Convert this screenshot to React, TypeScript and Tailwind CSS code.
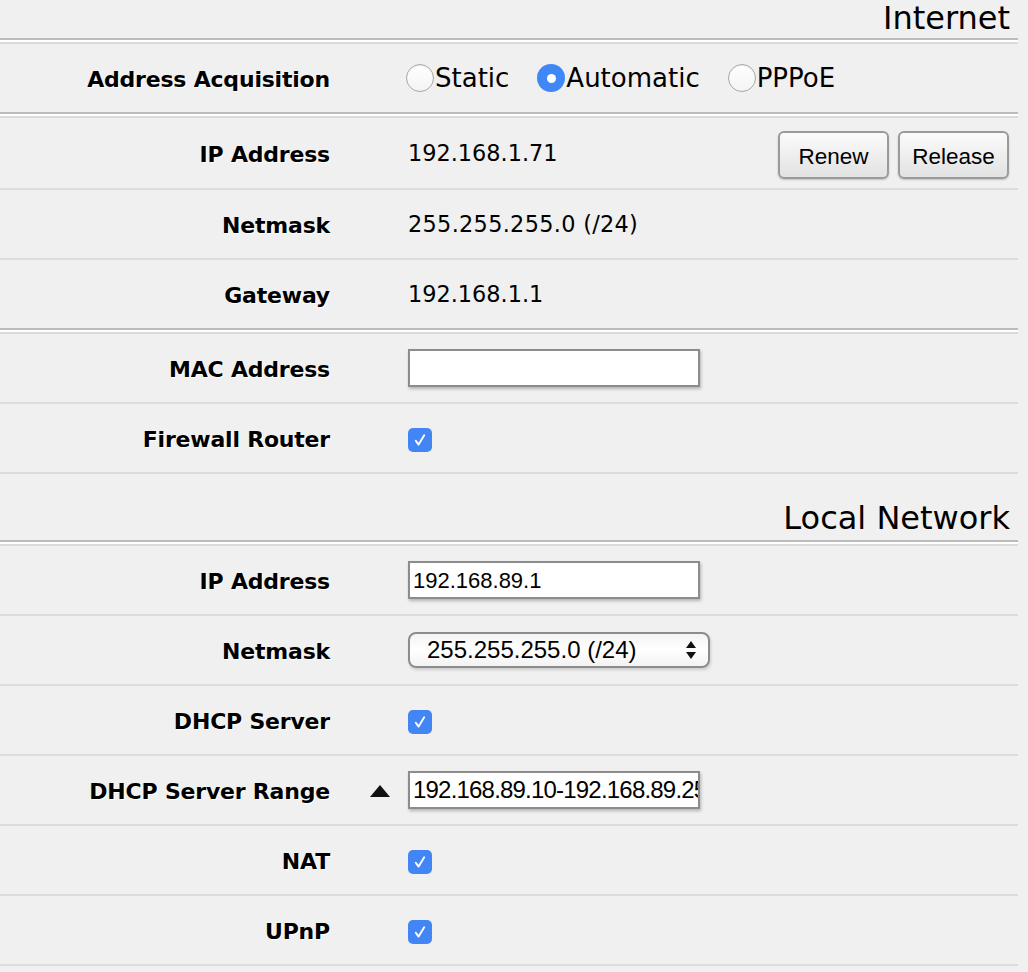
import React from 'react';

const verdana = "font-['DejaVu_Sans',Verdana,sans-serif]";
const helv = "font-['Liberation_Sans',Arial,sans-serif]";

function DoubleLine() {
  return (
    <div>
      <div className="h-[2px] bg-[#bcbcbc]" />
      <div className="h-[2px] bg-white" />
      <div className="h-[2px] bg-[#dadada]" />
    </div>
  );
}

function Row({ label, children, line = true, extra, h = 'h-[68px]' }: { label: string; children?: React.ReactNode; line?: boolean; extra?: React.ReactNode; h?: string }) {
  return (
    <div className={line ? 'border-b-2 border-[#dcdcdc]' : ''}>
      <div className={`flex items-center ${h}`}>
        <div className="w-[330px] shrink-0 text-right text-[22px] font-bold text-black tracking-[-0.2px] pt-[3px] [text-shadow:1px_1px_0_#fff]">{label}</div>
        <div className="w-[78px] shrink-0 flex justify-end pr-[18px] pt-[2px]">{extra}</div>
        <div className="flex-1 flex items-center">{children}</div>
      </div>
    </div>
  );
}

function Check() {
  return (
    <div className="w-[24px] h-[24px] mt-[3px] rounded-[5px] bg-[#4186f4] flex items-center justify-center">
      <svg width="16" height="16" viewBox="0 0 16 16" fill="none">
        <path d="M3.8 8.8 L6.6 12.6 L12.2 3.2" stroke="#fff" strokeWidth="1.9" strokeLinecap="round" strokeLinejoin="round" />
      </svg>
    </div>
  );
}

function Radio({ checked, label }: { checked?: boolean; label: string }) {
  return (
    <div className="flex items-center mr-[28px]">
      {checked ? (
        <div className="w-[28px] h-[28px] rounded-full bg-[#3e87f5] flex items-center justify-center">
          <div className="w-[9px] h-[9px] rounded-full bg-white" />
        </div>
      ) : (
        <div className="w-[28px] h-[28px] rounded-full border border-[#a8a8a8] bg-gradient-to-b from-white to-[#f4f4f4] shadow-[inset_0_1px_1px_rgba(0,0,0,0.08)]" />
      )}
      <span className="text-[26px] leading-none ml-[1px]">{label}</span>
    </div>
  );
}

function TextInput({ value }: { value?: string }) {
  return (
    <div className={`w-[292px] h-[38px] bg-white border-2 border-[#8c8c8c] shadow-[1px_2px_3px_rgba(0,0,0,0.25)] flex items-center px-[3px] overflow-hidden whitespace-nowrap ${helv} text-[22px]`}>
      {value}
    </div>
  );
}

function Button({ children }: { children: React.ReactNode }) {
  return (
    <div className={`w-[111px] h-[48px] rounded-[6px] border-2 border-[#9a9a9a] bg-gradient-to-b from-[#fbfbfb] to-[#e2e2e2] shadow-[0_1px_2px_rgba(0,0,0,0.2)] flex items-center justify-center pt-[4px] text-[22.5px] ${helv}`}>
      {children}
    </div>
  );
}

export default function App() {
  return (
    <div className={`min-h-screen bg-[#f0f0f0] text-black ${verdana}`}>
      <div className="w-[1018px]">
        <div className="h-[38px] flex items-start justify-end pr-[8px] text-[32px] leading-[36px]">Internet</div>
        <DoubleLine />
        <Row label="Address Acquisition" line={false}>
          <div className="flex items-center -ml-[2px]">
            <Radio label="Static" />
            <Radio checked label="Automatic" />
            <Radio label="PPPoE" />
          </div>
        </Row>
        <DoubleLine />
        <Row label="IP Address" h="h-[70px]">
          <span className="text-[22.4px] pt-[2px]">192.168.1.71</span>
          <div className="ml-auto flex gap-[9px] pr-[9px] pt-[3px]">
            <Button>Renew</Button>
            <Button>Release</Button>
          </div>
        </Row>
        <Row label="Netmask">
          <span className="text-[22.4px] pt-[2px] tracking-[0.3px]">255.255.255.0 (/24)</span>
        </Row>
        <Row label="Gateway" line={false}>
          <span className="text-[22.4px] pt-[2px]">192.168.1.1</span>
        </Row>
        <DoubleLine />
        <Row label="MAC Address">
          <TextInput />
        </Row>
        <Row label="Firewall Router">
          <Check />
        </Row>

        <div className="h-[66px] flex items-end justify-end pr-[8px] pb-[4px] text-[32px] leading-[36px]">Local Network</div>
        <DoubleLine />
        <Row label="IP Address">
          <TextInput value="192.168.89.1" />
        </Row>
        <Row label="Netmask">
          <div className={`w-[302px] h-[36px] rounded-[8px] border-2 border-[#8c8c8c] bg-gradient-to-b from-[#f4f4f4] via-white to-[#f2f2f2] shadow-[1px_2px_3px_rgba(0,0,0,0.15)] flex items-center pl-[17px] pr-[12px] ${helv} text-[24px]`}>
            <span>255.255.255.0 (/24)</span>
            <svg className="ml-auto" width="10" height="20" viewBox="0 0 10 20">
              <polygon points="5,1 10,8 0,8" fill="#111" />
              <polygon points="0,12 10,12 5,19" fill="#111" />
            </svg>
          </div>
        </Row>
        <Row label="DHCP Server">
          <Check />
        </Row>
        <Row
          label="DHCP Server Range"
          extra={
            <svg width="20" height="12" viewBox="0 0 20 12">
              <polygon points="10,0 20,12 0,12" fill="#111" />
            </svg>
          }
        >
          <div className={`w-[292px] h-[38px] bg-white border-2 border-[#8c8c8c] shadow-[1px_2px_3px_rgba(0,0,0,0.25)] flex items-center px-[3px] overflow-hidden whitespace-nowrap ${helv} text-[24px] tracking-[-0.8px]`}>
            192.168.89.10-192.168.89.254
          </div>
        </Row>
        <Row label="NAT">
          <Check />
        </Row>
        <Row label="UPnP">
          <Check />
        </Row>
      </div>
    </div>
  );
}
